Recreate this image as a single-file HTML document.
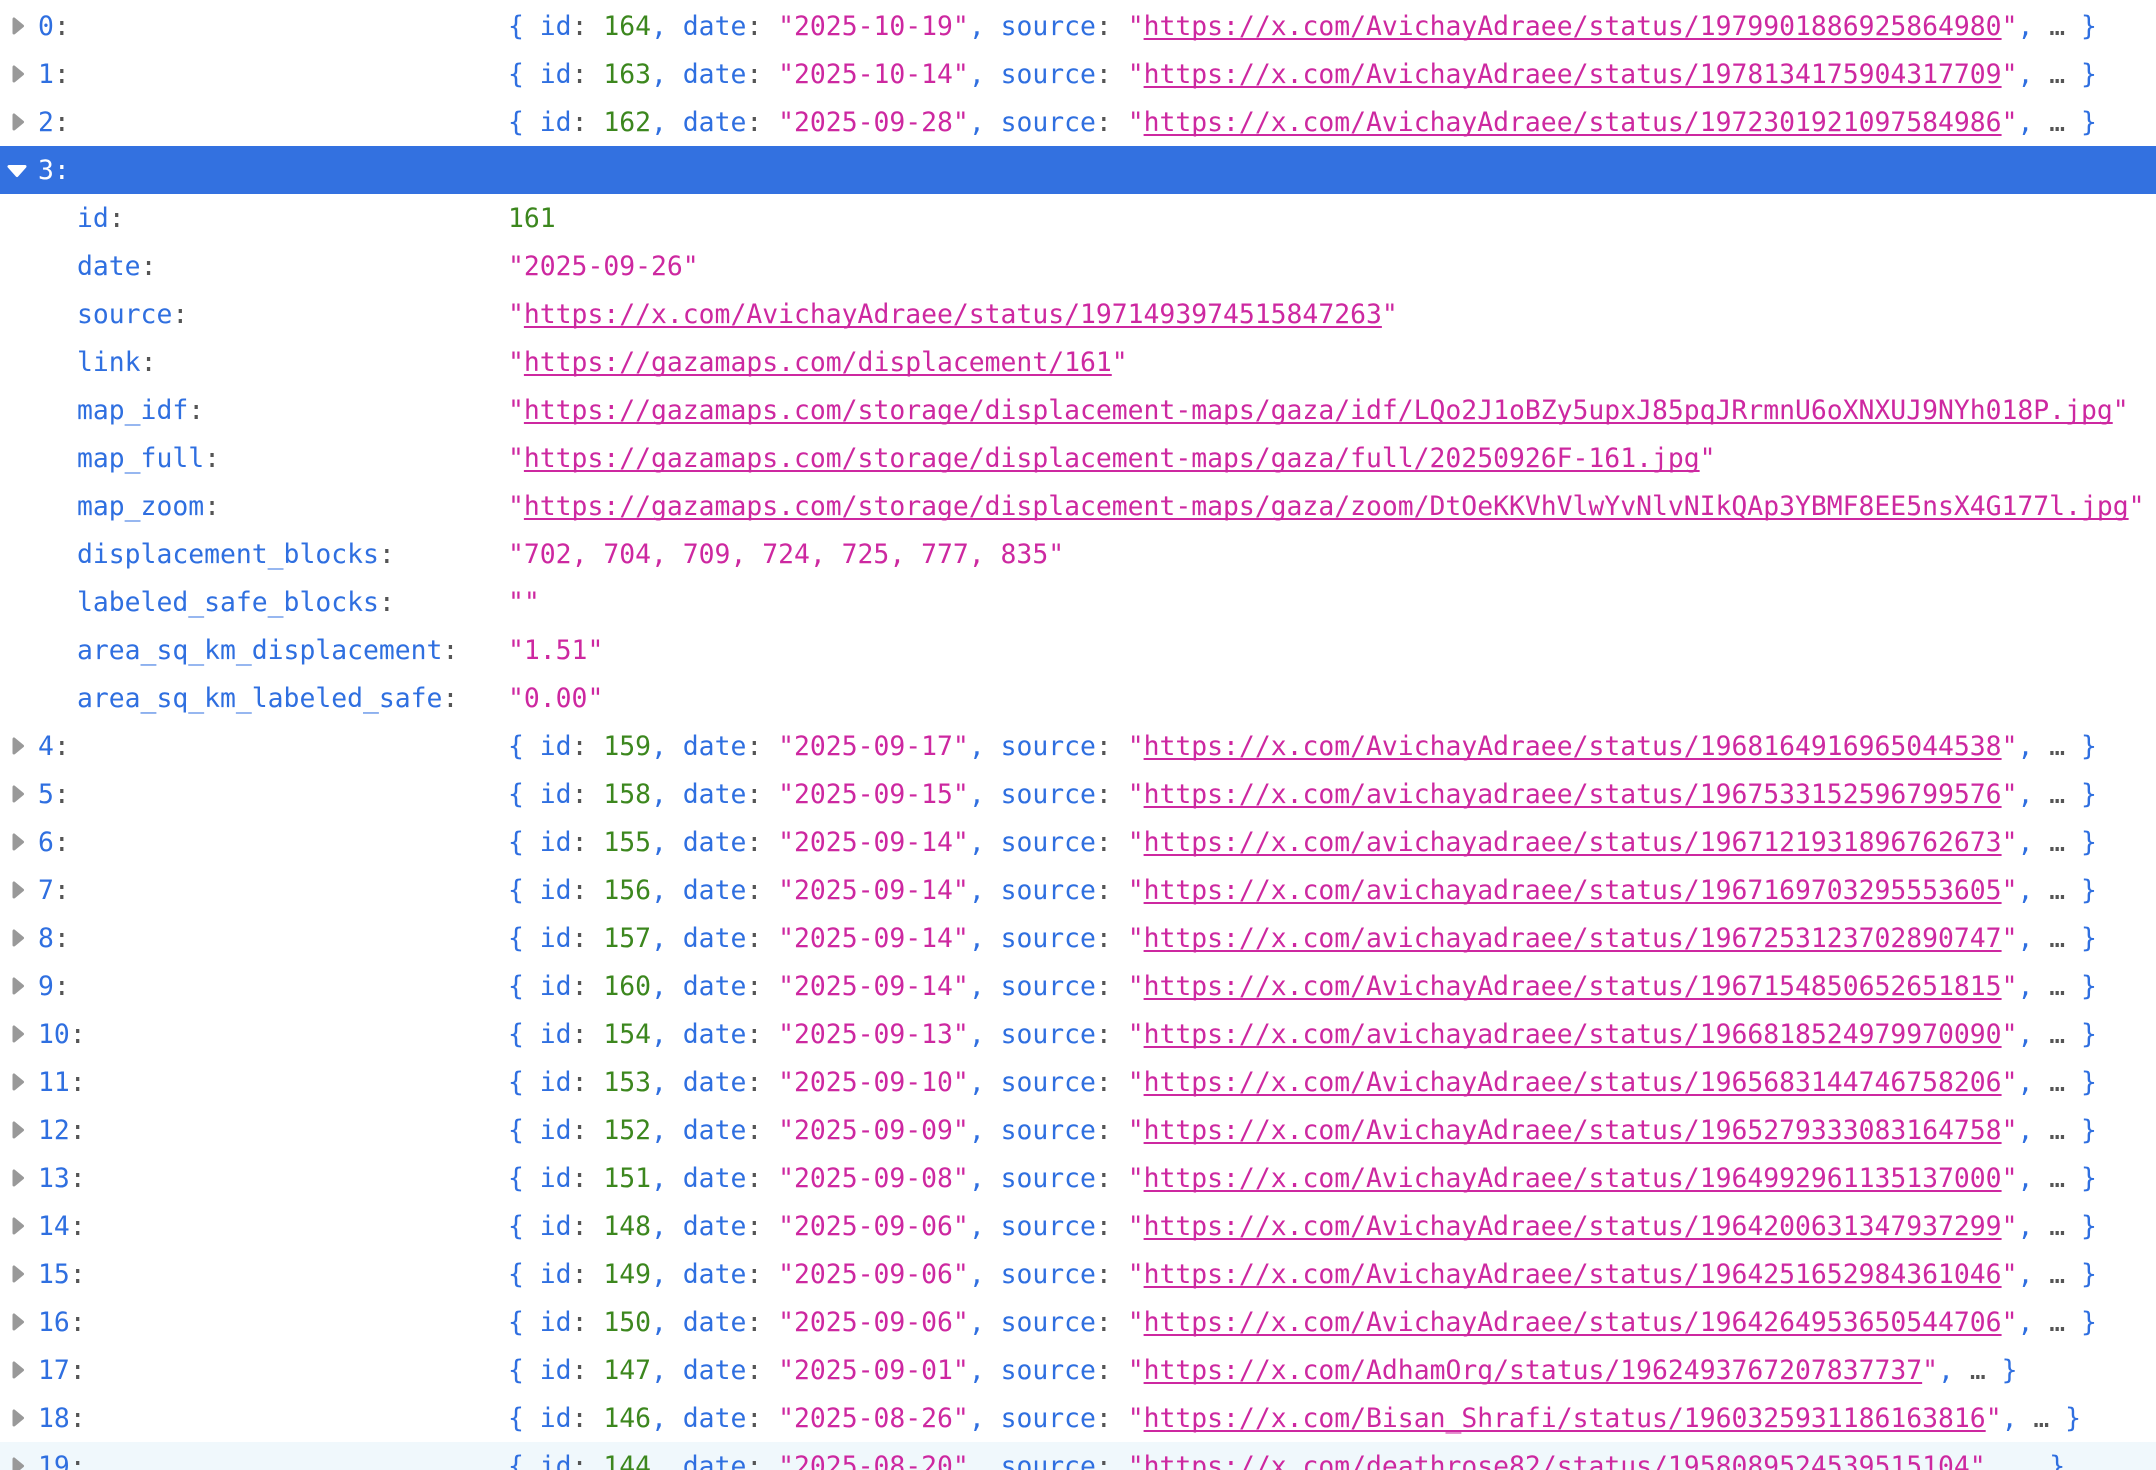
<!DOCTYPE html>
<html><head><meta charset="utf-8"><style>
html,body{margin:0;padding:0;background:#fff;width:2156px;height:1470px;overflow:hidden}
#w{position:absolute;left:0;top:2px;width:2156px;height:1468px;overflow:hidden;font:26.4px/48px "DejaVu Sans Mono","Liberation Mono",monospace;color:#2f6fe0}
.r{position:relative;height:48px;width:2156px}
.k,.v{white-space:pre}
.k{position:absolute;left:38px;top:1px}
.n .k{left:77px}
.v{position:absolute;left:508px;top:1px}
svg{position:absolute;left:0;top:0;width:40px;height:48px}
i{font-style:normal;color:#555}
b{font-weight:normal;color:#3c871e}
u,s{text-decoration:none;color:#cd28a0}
u{text-decoration:underline;text-decoration-thickness:2px;text-underline-offset:3px;text-decoration-skip-ink:none}
.sel{background:#3371e0;color:#fff}
.sel i{color:#fff}
.hov{background:#f0f8fc}
</style></head><body><div id="w">
<div class="r"><svg><path d="M14 17v14l8.500-7z" fill="#999" stroke="#999" stroke-width="3" stroke-linejoin="round"/></svg><span class="k">0<i>:</i></span><span class="v">{ id<i>:</i> <b>164</b>, date<i>:</i> <s>"2025-10-19"</s>, source<i>:</i> <s>"<u>https://x.com/AvichayAdraee/status/1979901886925864980</u>"</s>, <i>…</i> }</span></div>
<div class="r"><svg><path d="M14 17v14l8.500-7z" fill="#999" stroke="#999" stroke-width="3" stroke-linejoin="round"/></svg><span class="k">1<i>:</i></span><span class="v">{ id<i>:</i> <b>163</b>, date<i>:</i> <s>"2025-10-14"</s>, source<i>:</i> <s>"<u>https://x.com/AvichayAdraee/status/1978134175904317709</u>"</s>, <i>…</i> }</span></div>
<div class="r"><svg><path d="M14 17v14l8.500-7z" fill="#999" stroke="#999" stroke-width="3" stroke-linejoin="round"/></svg><span class="k">2<i>:</i></span><span class="v">{ id<i>:</i> <b>162</b>, date<i>:</i> <s>"2025-09-28"</s>, source<i>:</i> <s>"<u>https://x.com/AvichayAdraee/status/1972301921097584986</u>"</s>, <i>…</i> }</span></div>
<div class="r sel"><svg><path d="M9 20.500h16l-8 9z" fill="#fff" stroke="#fff" stroke-width="3" stroke-linejoin="round"/></svg><span class="k">3<i>:</i></span></div>
<div class="r n"><span class="k">id<i>:</i></span><span class="v"><b>161</b></span></div>
<div class="r n"><span class="k">date<i>:</i></span><span class="v"><s>"2025-09-26"</s></span></div>
<div class="r n"><span class="k">source<i>:</i></span><span class="v"><s>"<u>https://x.com/AvichayAdraee/status/1971493974515847263</u>"</s></span></div>
<div class="r n"><span class="k">link<i>:</i></span><span class="v"><s>"<u>https://gazamaps.com/displacement/161</u>"</s></span></div>
<div class="r n"><span class="k">map_idf<i>:</i></span><span class="v"><s>"<u>https://gazamaps.com/storage/displacement-maps/gaza/idf/LQo2J1oBZy5upxJ85pqJRrmnU6oXNXUJ9NYh018P.jpg</u>"</s></span></div>
<div class="r n"><span class="k">map_full<i>:</i></span><span class="v"><s>"<u>https://gazamaps.com/storage/displacement-maps/gaza/full/20250926F-161.jpg</u>"</s></span></div>
<div class="r n"><span class="k">map_zoom<i>:</i></span><span class="v"><s>"<u>https://gazamaps.com/storage/displacement-maps/gaza/zoom/DtOeKKVhVlwYvNlvNIkQAp3YBMF8EE5nsX4G177l.jpg</u>"</s></span></div>
<div class="r n"><span class="k">displacement_blocks<i>:</i></span><span class="v"><s>"702, 704, 709, 724, 725, 777, 835"</s></span></div>
<div class="r n"><span class="k">labeled_safe_blocks<i>:</i></span><span class="v"><s>""</s></span></div>
<div class="r n"><span class="k">area_sq_km_displacement<i>:</i></span><span class="v"><s>"1.51"</s></span></div>
<div class="r n"><span class="k">area_sq_km_labeled_safe<i>:</i></span><span class="v"><s>"0.00"</s></span></div>
<div class="r"><svg><path d="M14 17v14l8.500-7z" fill="#999" stroke="#999" stroke-width="3" stroke-linejoin="round"/></svg><span class="k">4<i>:</i></span><span class="v">{ id<i>:</i> <b>159</b>, date<i>:</i> <s>"2025-09-17"</s>, source<i>:</i> <s>"<u>https://x.com/AvichayAdraee/status/1968164916965044538</u>"</s>, <i>…</i> }</span></div>
<div class="r"><svg><path d="M14 17v14l8.500-7z" fill="#999" stroke="#999" stroke-width="3" stroke-linejoin="round"/></svg><span class="k">5<i>:</i></span><span class="v">{ id<i>:</i> <b>158</b>, date<i>:</i> <s>"2025-09-15"</s>, source<i>:</i> <s>"<u>https://x.com/avichayadraee/status/1967533152596799576</u>"</s>, <i>…</i> }</span></div>
<div class="r"><svg><path d="M14 17v14l8.500-7z" fill="#999" stroke="#999" stroke-width="3" stroke-linejoin="round"/></svg><span class="k">6<i>:</i></span><span class="v">{ id<i>:</i> <b>155</b>, date<i>:</i> <s>"2025-09-14"</s>, source<i>:</i> <s>"<u>https://x.com/avichayadraee/status/1967121931896762673</u>"</s>, <i>…</i> }</span></div>
<div class="r"><svg><path d="M14 17v14l8.500-7z" fill="#999" stroke="#999" stroke-width="3" stroke-linejoin="round"/></svg><span class="k">7<i>:</i></span><span class="v">{ id<i>:</i> <b>156</b>, date<i>:</i> <s>"2025-09-14"</s>, source<i>:</i> <s>"<u>https://x.com/avichayadraee/status/1967169703295553605</u>"</s>, <i>…</i> }</span></div>
<div class="r"><svg><path d="M14 17v14l8.500-7z" fill="#999" stroke="#999" stroke-width="3" stroke-linejoin="round"/></svg><span class="k">8<i>:</i></span><span class="v">{ id<i>:</i> <b>157</b>, date<i>:</i> <s>"2025-09-14"</s>, source<i>:</i> <s>"<u>https://x.com/avichayadraee/status/1967253123702890747</u>"</s>, <i>…</i> }</span></div>
<div class="r"><svg><path d="M14 17v14l8.500-7z" fill="#999" stroke="#999" stroke-width="3" stroke-linejoin="round"/></svg><span class="k">9<i>:</i></span><span class="v">{ id<i>:</i> <b>160</b>, date<i>:</i> <s>"2025-09-14"</s>, source<i>:</i> <s>"<u>https://x.com/AvichayAdraee/status/1967154850652651815</u>"</s>, <i>…</i> }</span></div>
<div class="r"><svg><path d="M14 17v14l8.500-7z" fill="#999" stroke="#999" stroke-width="3" stroke-linejoin="round"/></svg><span class="k">10<i>:</i></span><span class="v">{ id<i>:</i> <b>154</b>, date<i>:</i> <s>"2025-09-13"</s>, source<i>:</i> <s>"<u>https://x.com/avichayadraee/status/1966818524979970090</u>"</s>, <i>…</i> }</span></div>
<div class="r"><svg><path d="M14 17v14l8.500-7z" fill="#999" stroke="#999" stroke-width="3" stroke-linejoin="round"/></svg><span class="k">11<i>:</i></span><span class="v">{ id<i>:</i> <b>153</b>, date<i>:</i> <s>"2025-09-10"</s>, source<i>:</i> <s>"<u>https://x.com/AvichayAdraee/status/1965683144746758206</u>"</s>, <i>…</i> }</span></div>
<div class="r"><svg><path d="M14 17v14l8.500-7z" fill="#999" stroke="#999" stroke-width="3" stroke-linejoin="round"/></svg><span class="k">12<i>:</i></span><span class="v">{ id<i>:</i> <b>152</b>, date<i>:</i> <s>"2025-09-09"</s>, source<i>:</i> <s>"<u>https://x.com/AvichayAdraee/status/1965279333083164758</u>"</s>, <i>…</i> }</span></div>
<div class="r"><svg><path d="M14 17v14l8.500-7z" fill="#999" stroke="#999" stroke-width="3" stroke-linejoin="round"/></svg><span class="k">13<i>:</i></span><span class="v">{ id<i>:</i> <b>151</b>, date<i>:</i> <s>"2025-09-08"</s>, source<i>:</i> <s>"<u>https://x.com/AvichayAdraee/status/1964992961135137000</u>"</s>, <i>…</i> }</span></div>
<div class="r"><svg><path d="M14 17v14l8.500-7z" fill="#999" stroke="#999" stroke-width="3" stroke-linejoin="round"/></svg><span class="k">14<i>:</i></span><span class="v">{ id<i>:</i> <b>148</b>, date<i>:</i> <s>"2025-09-06"</s>, source<i>:</i> <s>"<u>https://x.com/AvichayAdraee/status/1964200631347937299</u>"</s>, <i>…</i> }</span></div>
<div class="r"><svg><path d="M14 17v14l8.500-7z" fill="#999" stroke="#999" stroke-width="3" stroke-linejoin="round"/></svg><span class="k">15<i>:</i></span><span class="v">{ id<i>:</i> <b>149</b>, date<i>:</i> <s>"2025-09-06"</s>, source<i>:</i> <s>"<u>https://x.com/AvichayAdraee/status/1964251652984361046</u>"</s>, <i>…</i> }</span></div>
<div class="r"><svg><path d="M14 17v14l8.500-7z" fill="#999" stroke="#999" stroke-width="3" stroke-linejoin="round"/></svg><span class="k">16<i>:</i></span><span class="v">{ id<i>:</i> <b>150</b>, date<i>:</i> <s>"2025-09-06"</s>, source<i>:</i> <s>"<u>https://x.com/AvichayAdraee/status/1964264953650544706</u>"</s>, <i>…</i> }</span></div>
<div class="r"><svg><path d="M14 17v14l8.500-7z" fill="#999" stroke="#999" stroke-width="3" stroke-linejoin="round"/></svg><span class="k">17<i>:</i></span><span class="v">{ id<i>:</i> <b>147</b>, date<i>:</i> <s>"2025-09-01"</s>, source<i>:</i> <s>"<u>https://x.com/AdhamOrg/status/1962493767207837737</u>"</s>, <i>…</i> }</span></div>
<div class="r"><svg><path d="M14 17v14l8.500-7z" fill="#999" stroke="#999" stroke-width="3" stroke-linejoin="round"/></svg><span class="k">18<i>:</i></span><span class="v">{ id<i>:</i> <b>146</b>, date<i>:</i> <s>"2025-08-26"</s>, source<i>:</i> <s>"<u>https://x.com/Bisan_Shrafi/status/1960325931186163816</u>"</s>, <i>…</i> }</span></div>
<div class="r hov"><svg><path d="M14 17v14l8.500-7z" fill="#999" stroke="#999" stroke-width="3" stroke-linejoin="round"/></svg><span class="k">19<i>:</i></span><span class="v">{ id<i>:</i> <b>144</b>, date<i>:</i> <s>"2025-08-20"</s>, source<i>:</i> <s>"<u>https://x.com/deathrose82/status/1958089524539515104</u>"</s>, <i>…</i> }</span></div>
</div></body></html>
